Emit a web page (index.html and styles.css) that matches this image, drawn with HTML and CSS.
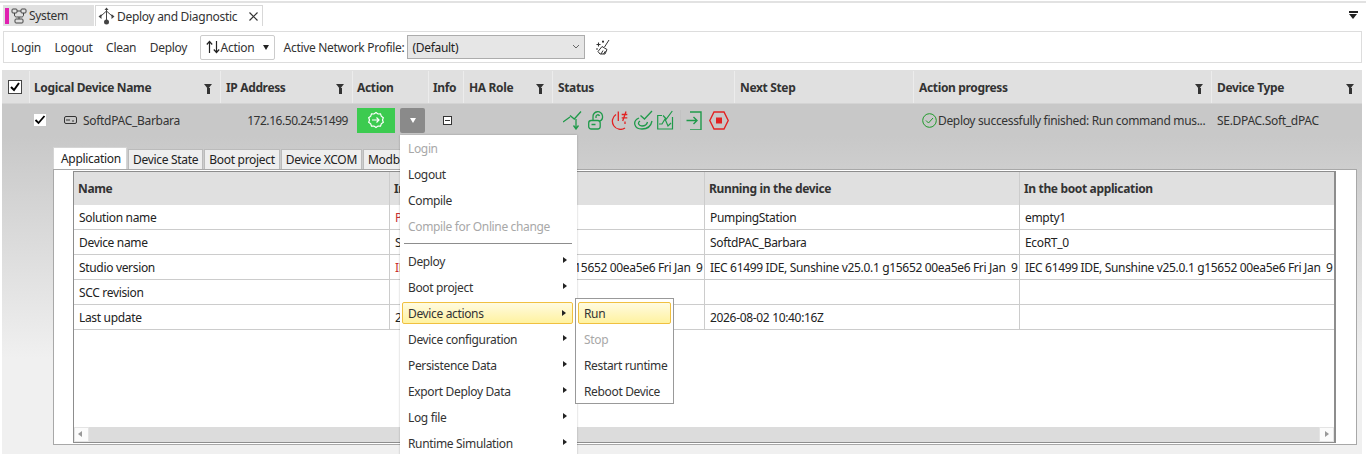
FILE: index.html
```html
<!DOCTYPE html>
<html>
	<head>
		<meta charset="UTF-8">
		<title>Deploy and Diagnostic</title>
		<link rel="stylesheet" href="styles.css">
	</head>
	<body>
		<div id="wrap">
			<div class="tabstrip">
				<div class="doc-tab system">
					<i class="pink"></i>
					<svg width="16" height="16" viewBox="0 0 16 16" fill="none" stroke="#444"><rect x="1" y="1" width="5" height="4" rx="1"/><rect x="10" y="1" width="5" height="4" rx="1"/><path d="M6 3h4M3.500 5v2c0 1.500 1 2 2 2h5c1.500 0 2-1 2-2V5M8 9v2"/><rect x="4" y="11" width="8" height="4" rx="1"/></svg>
					<span>System</span>
				</div>
				<div class="doc-tab active">
					<svg width="17" height="18" viewBox="0 0 17 18" fill="none" stroke="#444"><path d="M8.500 1v14M3 9l5.500-5L14 9"/><path d="M3.500 7L.5 9.500l3 2.500zM13.500 7l3 2.500-3 2.500z" fill="#444" stroke="none"/><path d="M6.500 3l2-2.500 2 2.500z" fill="#444" stroke="none"/><circle cx="8.500" cy="15" r="2.500" fill="#444" stroke="none"/></svg>
					<span>Deploy and Diagnostic</span>
					<svg class="close" width="9" height="9" viewBox="0 0 9 9" stroke="#333" stroke-width="1.200"><path d="M.5.5l8 8M8.500.5l-8 8"/></svg>
				</div>
				<div class="strip-menu"><b></b><em></em></div>
			</div>

			<div class="toolbar">
				<a>Login</a>
				<a>Logout</a>
				<a>Clean</a>
				<a>Deploy</a>
				<div class="action-btn">
					<svg width="14" height="14" viewBox="0 0 14 14" fill="none" stroke="#222" stroke-width="1.200"><path d="M3.500 13V1.500M.8 4.500l2.700-3 2.700 3M10.500 1v11.500M7.800 9.500l2.700 3 2.700-3"/></svg>
					<span>Action</span><em></em>
				</div>
				<span class="profile-label">Active Network Profile:</span>
				<div class="combo"><span>(Default)</span>
					<svg width="8" height="6" viewBox="0 0 8 6" fill="none" stroke="#666"><path d="M1 1l3 3 3-3"/></svg>
				</div>
				<svg class="broom" width="16" height="16" viewBox="0 0 16 16" fill="none" stroke="#333"><path d="M14 1L9.500 8M7 7.500l5 3-2 4.500H5L3 12.500zM6 15l2-3.500M8.500 15l2-3"/><path d="M3.500 3.500v4M1.500 5.500h4M8 1.500v2.500M7 2.500h2M1 10h2" stroke-width="1.100"/></svg>
			</div>

			<div class="grid-head">
				<div class="hc c-check"><span class="check"><svg width="12" height="12" viewBox="0 0 12 12" fill="none" stroke="#000" stroke-width="2"><path d="M2 6l3 3 5-7"/></svg></span></div>
				<div class="hc c-name">Logical Device Name<em class="funnel"></em></div>
				<div class="hc c-ip">IP Address<em class="funnel"></em></div>
				<div class="hc c-action">Action</div>
				<div class="hc c-info">Info</div>
				<div class="hc c-ha">HA Role<em class="funnel"></em></div>
				<div class="hc c-status">Status</div>
				<div class="hc c-next">Next Step</div>
				<div class="hc c-progress">Action progress<em class="funnel"></em></div>
				<div class="hc c-type">Device Type<em class="funnel"></em></div>
			</div>

			<div class="grid-row">
				<div class="rc c-check"></div>
				<div class="rc c-name">
					<span class="rowcheck"><svg width="12" height="12" viewBox="0 0 12 12" fill="none" stroke="#000" stroke-width="1.800"><path d="M1.500 6l3 3 6-7"/></svg></span>
					<svg class="chip" width="13" height="8" viewBox="0 0 13 8" fill="none" stroke="#333"><rect x=".5" y=".5" width="12" height="7" rx="1.500"/><path d="M3 3v2M5 3v2M8 5h2"/></svg>
					<span>SoftdPAC_Barbara</span>
				</div>
				<div class="rc c-ip ip-val">172.16.50.24:51499</div>
				<div class="rc c-action">
					<div class="go-btn">
						<svg width="18" height="18" viewBox="0 0 18 18" fill="none" stroke="#fff" stroke-width="1.200"><path d="M9 1.500l2 1.500 2.500-.2.800 2.400 2 1.500-.8 2.300.8 2.300-2 1.500-.8 2.400-2.500-.2-2 1.500-2-1.500-2.500.2-.8-2.400-2-1.500.8-2.300-.8-2.300 2-1.500.8-2.400 2.500.2z"/><path d="M5 9h7M9.500 6.500L12 9l-2.500 2.500"/></svg>
					</div>
					<div class="drop-btn"><em></em></div>
				</div>
				<div class="rc c-info"><span class="minus"></span></div>
				<div class="rc c-ha"></div>
				<div class="rc c-status">
					<svg width="25" height="20" viewBox="0 0 25 20" fill="none" stroke="#1f9a4a" stroke-width="1.300"><path d="M0 12l7-5M7 5.500L11.300 9 18 1.500M13 9v10M10.500 15.500L13 19l2.500-3.500"/></svg>
					<svg width="22" height="20" viewBox="0 0 22 20" fill="none" stroke="#1f9a4a" stroke-width="1.300"><rect x=".7" y="10.500" width="11.500" height="8.500" rx="2.500"/><path d="M5 10.500V7a4.500 4.500 0 0 1 9.500-1c.3 2-.5 4-2.500 5M8 8V6.500a1.800 1.800 0 0 1 3.500-.5M3.500 14.500h4"/></svg>
					<svg width="23" height="20" viewBox="0 0 23 20" fill="none" stroke="#e22222" stroke-width="1.300"><path d="M6 4.500A8 8 0 1 0 15 18M8.300 1.500V11M11.700 4.500h5.600M11.700 7.800h5.600M16 1.500L12.700 11M15 11.500V14"/></svg>
					<svg width="24" height="20" viewBox="0 0 24 20" fill="none" stroke="#1f9a4a" stroke-width="1.300"><path d="M6 8C-1 11 1 19 9 19c5 0 9-3 10-8M7 11c-3 2-1 5 2 5 3 0 5-2 5.500-4M7.500 5.500L11.500 9 19 1"/></svg>
					<svg width="23" height="20" viewBox="0 0 23 20" fill="none" stroke="#1f9a4a" stroke-width="1.200"><path d="M5 5.500H.7V19h14.800V7"/><path d="M2 14h3l3-5 3 7 3-3M6 5.500L9.300 9l6-8"/></svg>
					<i class="sep"></i>
					<svg width="23" height="20" viewBox="0 0 23 20" fill="none" stroke="#1f9a4a" stroke-width="1.400"><path d="M4 2h11v18H4M.5 10.500H11M7.500 7l3.500 3.500L7.500 14"/></svg>
					<svg width="20" height="20" viewBox="0 0 20 20" fill="none" stroke="#e22222" stroke-width="1.400"><path d="M.8 10.500L5 2h10l4.200 8.500L15 19H5z"/><rect x="7" y="7.500" width="6" height="6" fill="#e22222" stroke="none"/></svg>
				</div>
				<div class="rc c-next"></div>
				<div class="rc c-progress">
					<svg width="15" height="15" viewBox="0 0 15 15" fill="none" stroke="#1f9a2a"><circle cx="7.500" cy="7.500" r="6.800"/><path d="M4 7.500l2.500 2.500 4.500-5"/></svg>
					<span class="progress-text">Deploy successfully finished: Run command mus...</span>
				</div>
				<div class="rc c-type">SE.DPAC.Soft_dPAC</div>
			</div>

			<div class="details">
				<div class="detail-tabs">
					<div class="d-tab active">Application</div>
					<div class="d-tab">Device State</div>
					<div class="d-tab">Boot project</div>
					<div class="d-tab">Device XCOM</div>
					<div class="d-tab">Modbus</div>
				</div>
				<div class="detail-panel">
					<div class="inner">
						<div class="tbl">
							<div class="th">Name</div>
							<div class="th">In the project</div>
							<div class="th">Running in the device</div>
							<div class="th">In the boot application</div>

							<div class="td">Solution name</div>
							<div class="td red">PumpingStation</div>
							<div class="td">PumpingStation</div>
							<div class="td">empty1</div>

							<div class="td">Device name</div>
							<div class="td">SoftdPAC_Barbara</div>
							<div class="td">SoftdPAC_Barbara</div>
							<div class="td">EcoRT_0</div>

							<div class="td">Studio version</div>
							<div class="td"><span class="red">I</span>EC 61499 IDE, Sunshine v25.0.1 g15652 00ea5e6 Fri Jan  9</div>
							<div class="td">IEC 61499 IDE, Sunshine v25.0.1 g15652 00ea5e6 Fri Jan  9</div>
							<div class="td">IEC 61499 IDE, Sunshine v25.0.1 g15652 00ea5e6 Fri Jan  9</div>

							<div class="td">SCC revision</div>
							<div class="td"></div>
							<div class="td"></div>
							<div class="td"></div>

							<div class="td">Last update</div>
							<div class="td">2026-08-02 10:40:16Z</div>
							<div class="td">2026-08-02 10:40:16Z</div>
							<div class="td"></div>
						</div>
						<div class="scroll">
							<em class="arr-l"></em>
							<em class="arr-r"></em>
						</div>
					</div>
				</div>
			</div>

			<ul class="menu main-menu">
				<li class="off">Login</li>
				<li>Logout</li>
				<li>Compile</li>
				<li class="off">Compile for Online change</li>
				<li class="line"></li>
				<li class="sub">Deploy</li>
				<li class="sub">Boot project</li>
				<li class="sub hot">Device actions</li>
				<li class="sub">Device configuration</li>
				<li class="sub">Persistence Data</li>
				<li class="sub">Export Deploy Data</li>
				<li class="sub">Log file</li>
				<li class="sub">Runtime Simulation</li>
			</ul>
			<ul class="menu sub-menu">
				<li class="hot">Run</li>
				<li class="off">Stop</li>
				<li>Restart runtime</li>
				<li>Reboot Device</li>
			</ul>
		</div>
	</body>
</html>
```
FILE: styles.css
```css
*{
	margin:0px;
	padding:0px;
	box-sizing:border-box;
}
html,body{
	height:454px;
	overflow:hidden;
	background:#fff;
}
#wrap{
	width:1366px;
	height:454px;
	padding-top:1px;
	position:relative;
	overflow:hidden;
	font:12px "Noto Sans",sans-serif;
	letter-spacing:-0.3px;
	color:#333;
	display:flex;
	flex-direction:column;
}
svg{
	display:block;
	flex:none;
}

/* document tabs */
.tabstrip{
	height:25px;
	border-top:2px solid #e2e2e2;
	padding-left:3px;
	display:flex;
	align-items:flex-end;
	gap:1px;
}
.doc-tab{
	height:21px;
	display:flex;
	align-items:center;
	white-space:nowrap;
}
.doc-tab.system{
	width:91px;
	background:#e0e0e0;
	padding-left:2px;
}
.doc-tab .pink{
	width:4px;
	height:16px;
	background:#e020b0;
	margin-right:2px;
}
.doc-tab.system span{
	margin-left:2px;
}
.doc-tab.active{
	width:168px;
	border:1px solid #d8d8d8;
	border-bottom:0;
	padding-left:2px;
}
.doc-tab.active span{
	margin-left:2px;
}
.doc-tab .close{
	margin-left:auto;
	margin-right:4px;
}
.strip-menu{
	margin-left:auto;
	width:9px;
	margin-right:8px;
	align-self:center;
}
.strip-menu b{
	display:block;
	height:2px;
	background:#222;
	margin-bottom:1px;
}
.strip-menu em{
	display:block;
	width:0;
	border:4.500px solid transparent;
	border-top:5px solid #222;
	border-bottom:0;
}

/* toolbar */
.toolbar{
	height:32px;
	margin:5px 4px 0 3px;
	border:1px solid #ddd;
	display:flex;
	align-items:center;
	padding-left:7px;
}
.toolbar a{
	margin-right:13.5px;
}
.action-btn{
	width:75px;
	height:25px;
	border:1px solid #ccc;
	border-radius:2px;
	display:flex;
	align-items:center;
	padding:0 5px;
	margin-left:-1px;
	color:#333;
}
.action-btn span{
	margin-left:1px;
}
.action-btn em{
	margin-left:auto;
	border:3px solid transparent;
	border-top:5px solid #222;
	border-bottom:0;
}
.profile-label{
	margin-left:9px;
	margin-right:3px;
}
.combo{
	width:178px;
	height:24px;
	background:#e6e6e6;
	border:1px solid #acacac;
	display:flex;
	align-items:center;
	justify-content:space-between;
	padding:0 4px;
	color:#222;
}
.broom{
	margin-left:10px;
}

/* device grid */
.grid-head,.grid-row{
	display:flex;
	margin-left:2px;
	width:1360px;
}
.grid-head{
	height:33px;
	margin-top:7px;
	padding-top:1px;
	background:#e0e0e0;
	font-weight:bold;
	letter-spacing:-0.35px;
}
.grid-row{
	height:33px;
	background:#c8c8c8;
	border-top:1px solid #d4d4d4;
}
.c-check{width:28px;}
.c-name{width:191px;}
.c-ip{width:132px;}
.c-action{width:76px;}
.c-info{width:35px;}
.c-ha{width:89px;}
.c-status{width:182px;}
.c-next{width:179px;}
.c-progress{width:298px;}
.c-type{width:150px;}
.hc{
	display:flex;
	align-items:center;
	padding-left:5px;
	border-right:1px solid #ececec;
}
.hc.c-check,.hc.c-name,.hc.c-action,.hc.c-info{
	padding-left:4px;
}
.hc.c-type{border-right:0;}
.funnel{
	margin-left:auto;
	margin-right:8px;
	width:0;
	height:0;
	border-left:4.500px solid transparent;
	border-right:4.500px solid transparent;
	border-top:5px solid #333;
	position:relative;
	top:-1px;
}
.funnel:after{
	content:"";
	position:absolute;
	left:-1.500px;
	top:-1px;
	width:3px;
	height:6px;
	background:#333;
}
.check{
	width:14px;
	height:14px;
	margin-left:2px;
	background:#fff;
	border:1px solid #444;
	display:flex;
	align-items:center;
	justify-content:center;
}
.rc{
	display:flex;
	align-items:center;
}
.rowcheck{
	width:12px;
	height:12px;
	margin-left:4px;
	background:#fff;
}
.chip{
	margin-left:18px;
	margin-right:6px;
}
.ip-val{
	justify-content:flex-end;
	padding-right:5px;
	letter-spacing:-0.45px;
}
.go-btn{
	width:38px;
	height:25px;
	margin-left:4px;
	background:#3ccb50;
	display:flex;
	align-items:center;
	justify-content:center;
}
.drop-btn{
	width:25px;
	height:25px;
	margin-left:5px;
	background:#8a8a8a;
	border-radius:2px;
	display:flex;
	align-items:center;
	justify-content:center;
}
.drop-btn em{
	border:3.500px solid transparent;
	border-top:5px solid #fff;
	border-bottom:0;
}
.minus{
	display:block;
	width:9px;
	height:9px;
	margin-left:14px;
	background:#fff;
	border:1px solid #333;
	position:relative;
}
.minus:after{
	content:"";
	position:absolute;
	left:1px;
	top:3px;
	width:5px;
	height:1px;
	background:#333;
}
.rc.c-status{
	padding-left:10px;
}
.c-status .sep{
	width:1px;
	height:20px;
	background:#c2c2c2;
	margin-right:5px;
}
.rc.c-progress{
	padding-left:8px;
	gap:1px;
}
.progress-text{
	white-space:nowrap;
	letter-spacing:-0.33px;
}
.rc.c-type{
	padding-left:5px;
}

/* details under the row */
.details{
	flex:1;
	margin:0 0 0 2px;
	width:1360px;
	background:linear-gradient(#c8c8c8,#f0f0f0 70%);
	padding:11px 5px 9px 51px;
	display:flex;
	flex-direction:column;
}
.detail-tabs{
	display:flex;
	height:22px;
	gap:1px;
	align-items:flex-end;
}
.d-tab{
	height:20px;
	padding:0 4px;
	background:#eee;
	border:1px solid #bbb;
	border-bottom:0;
	display:flex;
	align-items:center;
	color:#222;
}
.d-tab.active{
	width:74px;
	height:22px;
	background:#fff;
	padding:0 0 0 7px;
	border-color:#d5d5d5;
}
.detail-panel{
	flex:1;
	background:#fff;
	border:1px solid #a8a8a8;
	padding:1px 20px 1px 19px;
}
.inner{
	height:272px;
	border:1px solid #8d8d8d;
	border-right:2px solid #8d8d8d;
	display:flex;
	flex-direction:column;
	justify-content:space-between;
}
.tbl{
	display:grid;
	grid-template-columns:316px 315px 315px 1fr;
	grid-template-rows:33px;
	grid-auto-rows:25px;
}
.th{
	background:#e0e0e0;
	font-weight:bold;
	letter-spacing:-0.35px;
	padding:0 4px;
	display:flex;
	align-items:center;
	border-right:1px solid #ccc;
	white-space:nowrap;
}
.th:nth-child(4),.td:nth-child(4n){
	border-right:0;
}
.td{
	padding:0 5px;
	display:flex;
	align-items:center;
	white-space:pre;
	overflow:hidden;
	letter-spacing:-0.33px;
	border-right:1px solid #ccc;
	border-bottom:1px solid #ccc;
	color:#222;
}
.td .red,.td.red{
	color:#c83030;
}
.scroll{
	height:15px;
	background:#dcdcdc;
	display:flex;
	justify-content:space-between;
	align-items:center;
}
.scroll em{
	width:15px;
	height:15px;
	background:#fbfbfb;
	border:1px solid #e4e4e4;
	position:relative;
}
.scroll em:after{
	content:"";
	position:absolute;
	top:3px;
	border:3px solid transparent;
}
.arr-l:after{
	left:0px;
	border-right:4px solid #999 !important;
}
.arr-r:after{
	left:5px;
	border-left:4px solid #999 !important;
}

/* context menus */
.menu{
	position:absolute;
	list-style:none;
	background:#fff;
	color:#333;
	letter-spacing:-0.35px;
}
.main-menu{
	left:400px;
	top:135px;
	width:177px;
	height:330px;
	padding:0 3px 0 2px;
	box-shadow:0 0 2px rgba(0,0,0,.25);
}
.sub-menu{
	left:575px;
	top:298px;
	width:99px;
	height:106px;
	border:1px solid #999;
	padding:1px 2px;
}
.menu li{
	height:26px;
	padding-left:6px;
	display:flex;
	align-items:center;
	white-space:nowrap;
	position:relative;
}
.menu .off{
	color:#a8a8a8;
}
.menu .line{
	height:6px;
	margin:1px 2px 2px;
	padding:0;
	background:linear-gradient(#8d8d8d,#8d8d8d) center/100% 1px no-repeat;
}
.menu .sub:after{
	content:"";
	position:absolute;
	right:7px;
	top:9px;
	border:3.500px solid transparent;
	border-left:4.500px solid #222;
	border-right:0;
}
.menu .hot{
	background:linear-gradient(#fffbe0,#fff2a0);
	border:1px solid #f0c040;
	border-radius:2px;
	height:22px;
	margin:2px 0;
	padding-left:5px;
}
.menu .sub.hot:after{
	right:6px;
	top:7px;
}
.main-menu .hot{
	width:171px;
}
```
